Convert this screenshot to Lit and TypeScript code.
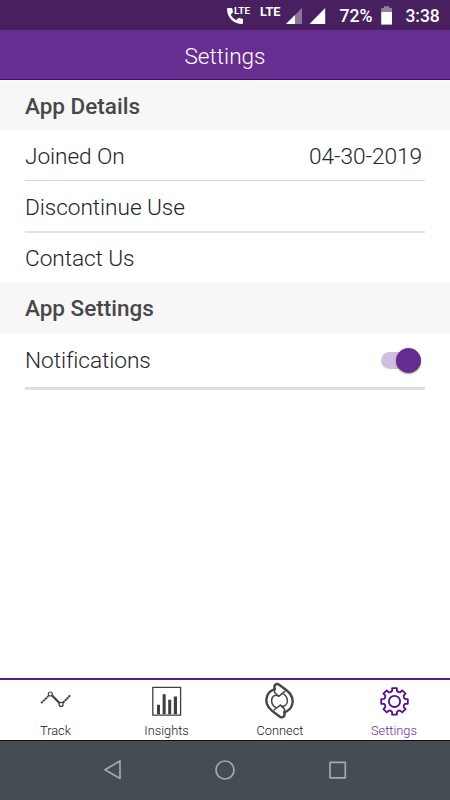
import { LitElement, html, css, svg } from "lit";
import { customElement, state } from "lit/decorators.js";
import { classMap } from "lit/directives/class-map.js";

/** Outline of an eight-toothed gear around the origin. */
function gearPath(root: number, tip: number): string {
  const pt = (r: number, deg: number) => {
    const a = (deg * Math.PI) / 180;
    return `${(r * Math.cos(a)).toFixed(2)} ${(r * Math.sin(a)).toFixed(2)}`;
  };
  let d = "";
  for (let i = 0; i < 8; i++) {
    const c = i * 45 - 90;
    d += `${i ? "L" : "M"}${pt(root, c - 13)}L${pt(tip, c - 10)}L${pt(tip, c + 10)}L${pt(root, c + 13)}`;
    d += `Q${pt(root - 1.2, c + 22.5)} ${pt(root, c + 32)}`;
  }
  return d + "Z";
}

const icons = {
  track: svg`<svg width="32" height="36" viewBox="0.3 -1.2 32 36" fill="none" stroke="#3f3f41">
    <path d="M1.5 18.8 8.6 12" stroke-width="2" stroke-dasharray="2.2 .5"/>
    <path d="M12.4 11.2 20 19" stroke-width="2.2"/>
    <path d="M23.2 18.6 30.6 11" stroke-width="2" stroke-dasharray="2.2 .5"/>
    <circle cx="10.6" cy="9.8" r="2" stroke-width="1.2"/>
    <circle cx="21.4" cy="20.2" r="2" stroke-width="1.2"/></svg>`,
  insights: svg`<svg width="32" height="36" viewBox="0.8 0.3 32 36" fill="#404042">
    <path d="M2.6 4.6H30.4V32.4H2.6Z" fill="none" stroke="#404042" stroke-width="1.3"/>
    <path d="M6.8 22H9.8V31.6H6.8ZM12.4 11.6H15.5V31.6H12.4ZM18 17H21V31.6H18ZM23.6 13.8H26.8V31.6H23.6Z"/></svg>`,
  connect: svg`<svg width="32" height="36" viewBox="0.5 0.3 32 36" fill="none" stroke="#454545" stroke-width="2.4" stroke-linejoin="round" stroke-linecap="round">
    <path d="M11.2 6.4C10 2.4 12.8.2 15.6 2L23.4 7.8C28.4 11.5 30.6 17.5 28.2 23.2C26.9 26.4 24 28.6 20.8 29.6"/>
    <path d="M20.8 29.6C22 33.6 19.2 35.8 16.4 34L8.6 28.2C3.6 24.5 1.4 18.5 3.8 12.8C5.1 9.6 8 7.4 11.2 6.4"/>
    <path stroke-width="1.5" d="M11.2 6.4 10.9 9.6 15.2 13.6 21.4 8.7M15.2 13.6C11.2 10.6 7.7 14.6 8.1 18.6C8.5 21.8 10.4 23.8 12.6 25M20.8 29.6 21.1 26.4 16.8 22.4 10.6 27.3M16.8 22.4C20.8 25.4 24.3 21.4 23.9 17.4C23.5 14.2 21.6 12.2 19.4 11"/>
  </svg>`,
  settings: svg`<svg width="32" height="36" viewBox="-16.5 -18.4 32 36" fill="none" stroke="#550f8b" stroke-width="1.8" stroke-linejoin="round">
    <path d="${gearPath(10.8, 13.5)}"/><circle r="5.6"/></svg>`,
};

type TabId = keyof typeof icons;

@customElement("status-bar")
class StatusBar extends LitElement {
  static styles = css`
    :host { display: block; height: 30px; background: #48205f; }
    svg { display: block; }
    text { font-family: Roboto, "Noto Sans", sans-serif; fill: #fff; }
    .tag { font-weight: 700; }
    .value { font-weight: 500; }
  `;
  render() {
    return html`<svg width="450" height="30" viewBox="0 0 450 30" fill="#fff">
      <path d="M228 8H231.5Q232.2 8 232.4 9L232.9 11.8Q233 12.4 232.5 13L230.6 14.8Q232.6 18.4 236.2 20.2L238.1 18.3Q238.5 17.9 239.2 18.1L242.2 18.8Q243 19 243 19.8V23Q243 24 242 24C233.6 24 227 17.4 227 9Q227 8 228 8Z"/>
      <text class="tag" x="234" y="13.6" font-size="9.8" textLength="16" lengthAdjust="spacingAndGlyphs">LTE</text>
      <text class="tag" x="260" y="16" font-size="13" textLength="20.4" lengthAdjust="spacingAndGlyphs">LTE</text>
      <path d="M302 8V24H286Z" opacity=".38"/><path d="M295 15V24H286Z"/>
      <path d="M325.2 8V24H309.5Z"/>
      <text class="value" x="339.5" y="22" font-size="18" textLength="33" lengthAdjust="spacingAndGlyphs">72%</text>
      <path d="M384 6.2H389.3V8H392V12H381.2V8H384Z" opacity=".42"/><path d="M381.2 12H392V24.6H381.2Z"/>
      <text class="value" x="405.4" y="22" font-size="18.2" textLength="34.4" lengthAdjust="spacingAndGlyphs">3:38</text>
    </svg>`;
  }
}

@customElement("toggle-switch")
class ToggleSwitch extends LitElement {
  static styles = css`
    :host { display: flex; align-items: center; width: 44px; height: 26px; }
    .track { display: flex; align-items: center; justify-content: flex-end; width: 36px; height: 17px;
      border-radius: 9px; background: #d0bfde; }
    .thumb { flex: none; width: 25px; height: 25px; border-radius: 50%; background: #652d90;
      box-shadow: 0 1px 2px rgba(0, 0, 0, 0.38); margin-right: -4px; }
  `;
  render() {
    return html`<div class="track"><div class="thumb"></div></div>`;
  }
}

@customElement("app-root")
class AppRoot extends LitElement {
  static styles = css`
    :host { display: flex; flex-direction: column; height: 800px; width: 450px; overflow: hidden;
      background: #fff; font-family: Roboto, "Noto Sans", sans-serif; }
    .title { box-sizing: border-box; height: 50px; background: #682d91; border-bottom: 1px solid #450d70;
      color: #fff; font-size: 22.6px; line-height: 53px; font-weight: 300; text-align: center; }
    main { flex: 1; padding-top: 1px; }
    h2 { margin: 0; padding: 0 25px; height: 49px; line-height: 50px; background: #f7f7f7;
      color: #48484b; font-size: 22.5px; font-weight: 500; }
    .second { height: 50.5px; line-height: 51px; }
    .row { box-sizing: border-box; display: flex; justify-content: space-between; align-items: center;
      height: 51px; margin: 0 25px; padding: 2px 3px 0 0; border-bottom: 1px solid #d6d6d6;
      font-size: 22.7px; font-weight: 300; letter-spacing: -0.08px; color: #242428; }
    .row.tall { height: 52px; padding-top: 3px; border-bottom: 2px solid #e1e1e1; }
    .row.last { border-bottom: none; padding-top: 2px; height: 49.5px; }
    .row.toggle { height: 56.5px; padding: 1px 0 0; border-bottom: 3px solid #e0e0e0; }
    .tabs { box-sizing: border-box; display: grid; grid-template-columns: 111px 111px 116px 112px;
      height: 62px; border-top: 2px solid #5c1a89; }
    .tab { display: flex; flex-direction: column; align-items: center; padding-top: 3px;
      color: #151517; font-size: 12.8px; font-weight: 320; line-height: 16px; }
    .tab svg { display: block; margin-bottom: 4px; overflow: visible; }
    .active { color: #6a2c96; }
    .nav { box-sizing: border-box; height: 60px; border-top: 1px solid #101214; background: #454c52; }
    .nav svg { display: block; }
  `;

  @state() private current: TabId = "settings";

  private tabs: { id: TabId; label: string }[] = [
    { id: "track", label: "Track" },
    { id: "insights", label: "Insights" },
    { id: "connect", label: "Connect" },
    { id: "settings", label: "Settings" },
  ];

  render() {
    return html`
      <status-bar></status-bar>
      <header class="title">Settings</header>
      <main>
        <h2>App Details</h2>
        <div class="row"><span>Joined On</span><span>04-30-2019</span></div>
        <div class="row tall"><span>Discontinue Use</span></div>
        <div class="row last"><span>Contact Us</span></div>
        <h2 class="second">App Settings</h2>
        <div class="row toggle"><span>Notifications</span><toggle-switch></toggle-switch></div>
      </main>
      <nav class="tabs">
        ${this.tabs.map(
          (t) => html`<div class=${classMap({ tab: true, active: t.id === this.current })}
            @click=${() => (this.current = t.id)}>${icons[t.id]}<span>${t.label}</span></div>`
        )}
      </nav>
      <div class="nav">
        <svg width="450" height="59" viewBox="0 741 450 59" fill="none" stroke="#a6a9ab" stroke-width="1.7" stroke-linejoin="round">
          <path d="M120 761V778.5L105 769.8Z"/>
          <circle cx="225" cy="770" r="9"/>
          <path d="M330 762.3H345.3V777.8H330Z"/>
        </svg>
      </div>
    `;
  }
}
